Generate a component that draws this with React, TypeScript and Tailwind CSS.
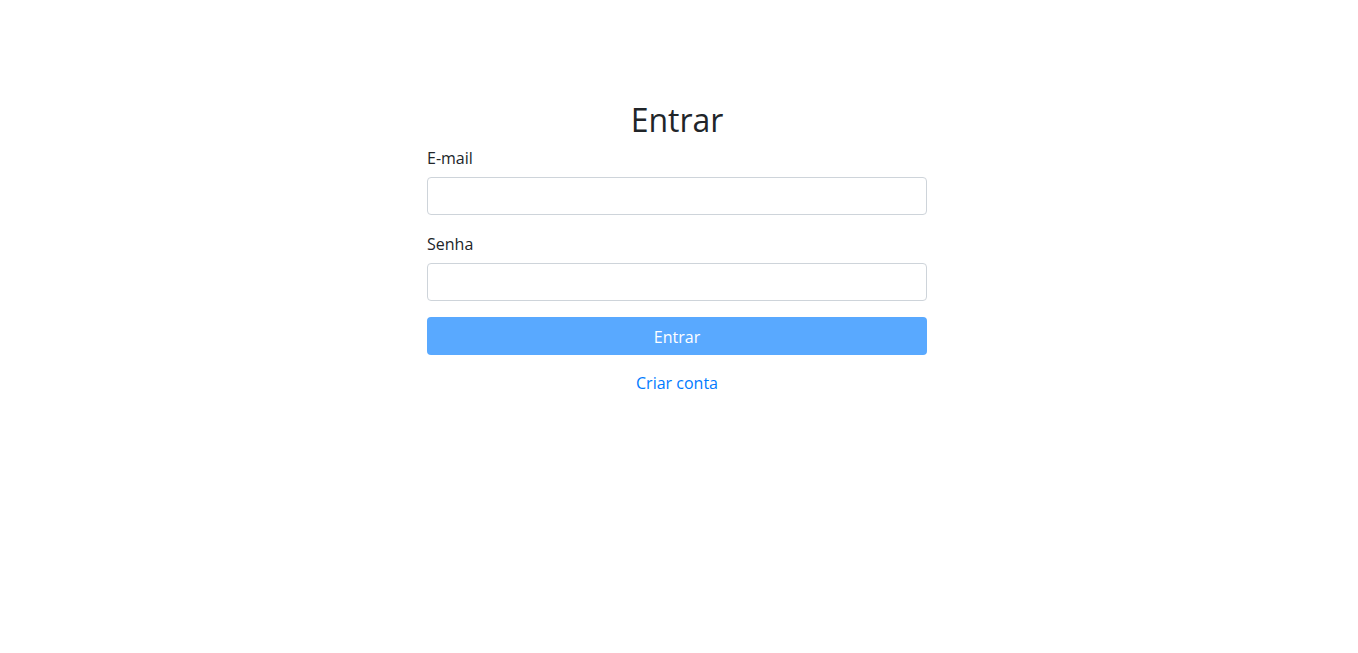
export default function App() {
  return (
    <div
      className="min-h-[653px] bg-white text-[#212529] pr-1"
      style={{ fontFamily: '"Segoe UI", "Open Sans", sans-serif' }}
    >
      <div className="mx-auto w-[500px] pt-[101px]">
        <h2 className="text-center text-[32px] leading-[38px] font-normal mb-[6px]">Entrar</h2>
        <form>
          <div className="mb-4">
            <label className="block text-base leading-6 pt-px mb-[7px]">E-mail</label>
            <input
              type="email"
              className="block w-full h-[38px] rounded border border-[#ced4da] px-3 text-base outline-none"
            />
          </div>
          <div className="mb-4">
            <label className="block text-base leading-6 pt-px mb-[7px]">Senha</label>
            <input
              type="password"
              className="block w-full h-[38px] rounded border border-[#ced4da] px-3 text-base outline-none"
            />
          </div>
          <button
            type="button"
            className="block w-full h-[38px] rounded bg-[#59a9ff] text-white text-base leading-6 pt-px"
          >
            Entrar
          </button>
        </form>
        <div className="mt-4 text-center leading-6">
          <a href="#" className="text-[#007bff] text-base">Criar conta</a>
        </div>
      </div>
    </div>
  );
}
